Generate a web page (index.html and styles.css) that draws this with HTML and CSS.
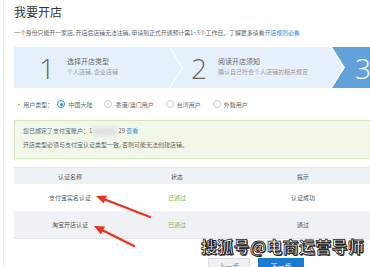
FILE: index.html
```html
<!DOCTYPE html>
<html>
<head>
  <title>我要开店</title>
  <meta charset="UTF-8">
  <link rel="stylesheet" href="styles.css">
</head>
<body>
  <div class="page">
    <h1 class="title">我要开店</h1>
    <p class="intro">一个身份只能开一家店, 开店后店铺无法注销, 申请到正式开通预计需1~3个工作日。了解更多请看<a href="#">开店规则必看</a></p>

    <div class="steps">
      <div class="step step-first">
        <span class="step-num">1</span>
        <div class="step-text">
          <div class="step-title">选择开店类型</div>
          <div class="step-sub">个人店铺, 企业店铺</div>
        </div>
      </div>
      <div class="step step-mid">
        <span class="step-num">2</span>
        <div class="step-text">
          <div class="step-title">阅读开店须知</div>
          <div class="step-sub">确认自己符合个人店铺的相关规定</div>
        </div>
      </div>
      <div class="step step-active">
        <span class="step-num">3</span>
      </div>
    </div>

    <div class="user-type">
      <span class="label"><i class="req">•</i> 用户类型：</span>
      <label class="radio checked"><span class="dot"></span>中国大陆</label>
      <label class="radio"><span class="dot"></span>香港/澳门用户</label>
      <label class="radio"><span class="dot"></span>台湾用户</label>
      <label class="radio"><span class="dot"></span>外籍用户</label>
    </div>

    <div class="notice">
      <p>您已绑定了支付宝账户：1<span class="blur"></span>29 <a href="#">查看</a></p>
      <p>开店类型必须与支付宝认证类型一致, 否则可能无法创建店铺。</p>
    </div>

    <table class="auth">
      <thead>
        <tr><th class="c1">认证名称</th><th class="c2">状态</th><th class="c3">提示</th></tr>
      </thead>
      <tbody>
        <tr><td>支付宝实名认证</td><td class="ok">已通过</td><td>认证成功</td></tr>
        <tr class="alt"><td>淘宝开店认证</td><td class="ok">已通过</td><td>通过</td></tr>
      </tbody>
    </table>

    <div class="footer">
      <button class="btn btn-prev">上一步</button>
      <button class="btn btn-next">下一步</button>
    </div>
  </div>

  <svg class="arrows" width="370" height="267" viewBox="0 0 370 267">
    <line x1="150" y1="217" x2="105" y2="199.5" stroke="#e8341c" stroke-width="2.4" stroke-linecap="round"/>
    <polygon points="96,196 107,195.6 103.7,203.6" fill="#e8341c"/>
    <line x1="134" y1="246" x2="103" y2="230.5" stroke="#e8341c" stroke-width="2.4" stroke-linecap="round"/>
    <polygon points="94,226 105,226.6 100.9,234.4" fill="#e8341c"/>
  </svg>

  <div class="watermark">搜狐号@电商运营导师</div>
</body>
</html>
```

FILE: styles.css
```css
body {
  margin: 0;
  width: 370px;
  height: 267px;
  overflow: hidden;
  position: relative;
  background: #fff;
  font-family: "Noto Sans CJK SC", "Noto Sans", sans-serif;
  color: #555;
}
.page {
  margin-left: 3px;
  padding-left: 10px;
  border-left: 1px solid #ececec;
  width: 420px;
}
.title {
  margin: 0;
  padding-top: 4px;
  font-size: 12px;
  line-height: 16px;
  font-weight: normal;
  color: #333;
}
.intro {
  margin: 8px 0 0;
  font-size: 6px;
  line-height: 10px;
  letter-spacing: -0.12px;
  color: #666;
  white-space: nowrap;
}
a {
  color: #3b8fe0;
  text-decoration: none;
}
.steps {
  display: flex;
  margin-top: 9px;
  height: 41px;
}
.step {
  display: flex;
  align-items: center;
  background: #e6f0fb;
  flex-shrink: 0;
}
.step-first {
  width: 168px;
  clip-path: polygon(0 0, calc(100% - 13px) 0, 100% 50%, calc(100% - 13px) 100%, 0 100%);
}
.step-mid {
  width: 173px;
  margin-left: -12px;
  clip-path: polygon(0 0, calc(100% - 13px) 0, 100% 50%, calc(100% - 13px) 100%, 0 100%, 13px 50%);
}
.step-active {
  width: 80px;
  margin-left: -11px;
  background: #62a1da;
  clip-path: polygon(0 0, 100% 0, 100% 100%, 0 100%, 13px 50%);
}
.step-num {
  font-family: "Open Sans", "Liberation Sans", sans-serif;
  font-weight: 300;
  font-size: 28px;
  line-height: 28px;
  color: #666;
}
.step-first .step-num {
  margin-left: 25px;
}
.step-mid .step-num {
  margin-left: 21px;
}
.step-active .step-num {
  margin-left: 23px;
  color: #fff;
}
.step-text {
  margin-left: 12px;
  margin-top: -2px;
}
.step-mid .step-text {
  margin-left: 11px;
}
.step-title {
  font-size: 7px;
  line-height: 11px;
  color: #666;
}
.step-sub {
  font-size: 6px;
  line-height: 10px;
  color: #999;
}
.user-type {
  display: flex;
  align-items: center;
  margin-top: 11px;
  height: 10px;
  font-size: 6px;
  color: #666;
}
.label {
  margin-left: 2px;
  margin-right: 4px;
}
.req {
  font-style: normal;
  color: #e8341c;
}
.radio {
  display: flex;
  align-items: center;
  margin-right: 12px;
}
.dot {
  box-sizing: border-box;
  width: 8px;
  height: 8px;
  border: 1px solid #c8c8c8;
  border-radius: 50%;
  margin-right: 3px;
  position: relative;
}
.radio.checked .dot {
  border-color: #2a8ce0;
}
.radio.checked .dot::after {
  content: "";
  position: absolute;
  left: 1.5px;
  top: 1.5px;
  width: 3px;
  height: 3px;
  border-radius: 50%;
  background: #2a8ce0;
}
.notice {
  margin-top: 11px;
  height: 39px;
  box-sizing: border-box;
  padding: 5px 8px 0;
  background: #f1f8ea;
  border: 1px solid #d3e7c2;
  font-size: 6px;
  color: #666;
}
.notice p {
  margin: 0 0 4px;
  line-height: 10px;
}
.blur {
  display: inline-block;
  width: 24px;
  height: 7px;
  vertical-align: middle;
  background: #dcdcdc;
  filter: blur(2px);
  margin: 0 1px;
}
.auth {
  margin-top: 8px;
  border-collapse: collapse;
  width: 364px;
  font-size: 6px;
  color: #555;
}
.auth th {
  height: 16px;
  padding: 0;
  font-weight: normal;
  background: #eff2f5;
  border-top: 1px solid #e3e7eb;
}
.auth td {
  height: 27px;
  padding: 0;
  text-align: center;
}
.auth .c1 {
  width: 112px;
}
.auth .c2 {
  width: 102px;
}
.auth tr.alt td {
  background: #eff2f5;
  border-bottom: 1px solid #e3e7eb;
}
.auth td.ok {
  color: #7cbb4e;
}
.footer {
  display: flex;
  align-items: flex-start;
  gap: 8px;
  margin-top: 19px;
  height: 9px;
  margin-left: -14px;
  padding-left: 208px;
  border-bottom: 1px solid #e6e6e6;
}
.btn {
  flex-shrink: 0;
  height: 16px;
  margin-bottom: -10px;
  padding: 0;
  border: 1px solid #dcdfe3;
  font-family: inherit;
  font-size: 7px;
  line-height: 10px;
}
.btn-prev {
  width: 42px;
  background: #eef0f2;
  color: #888;
}
.btn-next {
  width: 46px;
  background: #1a7bd0;
  border-color: #1a7bd0;
  color: #fff;
}
.arrows {
  position: absolute;
  left: 0;
  top: 0;
}
.watermark {
  position: absolute;
  left: 201px;
  top: 236px;
  font-size: 16px;
  line-height: 20px;
  font-weight: bold;
  color: #fff;
  letter-spacing: 0.3px;
  -webkit-text-stroke: 0.8px #222;
  text-shadow: 1px 1px 0 #333;
}
```
